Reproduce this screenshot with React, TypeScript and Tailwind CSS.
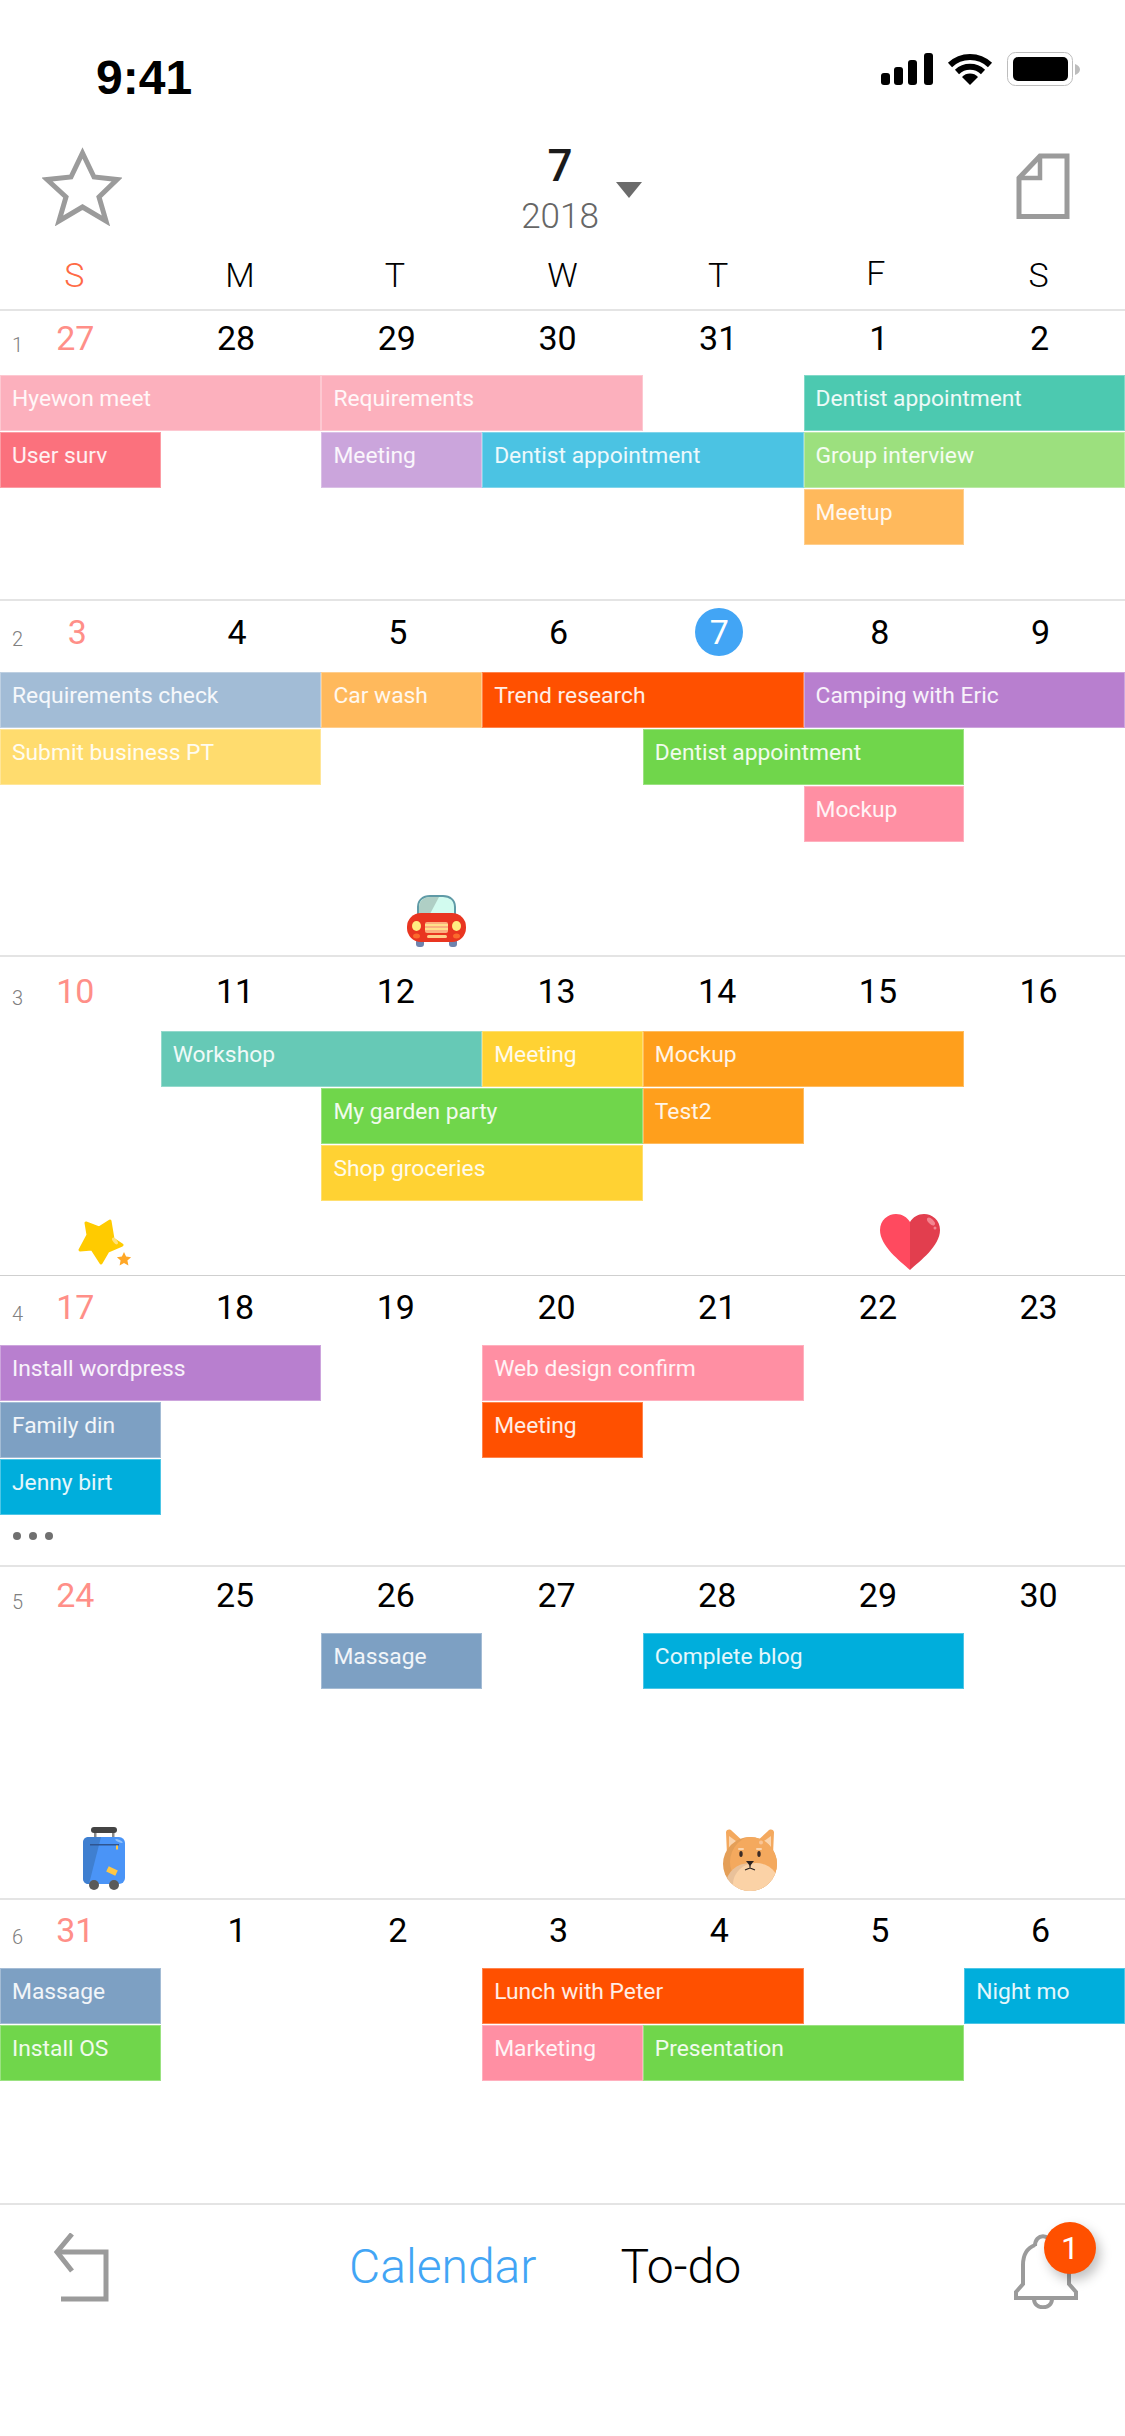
import React from 'react';

type Ev = { label: string; color: string; pos: string };

type Week = {
  no: number;
  days: number[];
  box: string;
  head: string;
  first: string;
  cell: string;
  events: Ev[];
};

const weeks: Week[] = [
  {
    no: 1,
    days: [27, 28, 29, 30, 31, 1, 2],
    box: 'h-[290px] border-t-2 border-[#e4e4e4]',
    head: 'h-[64px] pb-[10px]',
    first: 'pr-[10px]',
    cell: 'pr-[10px]',
    events: [
      { label: 'Hyewon meet', color: 'bg-[#fcb0bd]', pos: 'col-start-1 col-span-2 row-start-1' },
      { label: 'Requirements', color: 'bg-[#fcb0bd]', pos: 'col-start-3 col-span-2 row-start-1' },
      { label: 'Dentist appointment', color: 'bg-[#4cc9b0]', pos: 'col-start-6 col-span-2 row-start-1' },
      { label: 'User surv', color: 'bg-[#fb717d]', pos: 'col-start-1 col-span-1 row-start-2' },
      { label: 'Meeting', color: 'bg-[#cba5dc]', pos: 'col-start-3 col-span-1 row-start-2' },
      { label: 'Dentist appointment', color: 'bg-[#4bc3e3]', pos: 'col-start-4 col-span-2 row-start-2' },
      { label: 'Group interview', color: 'bg-[#9ce07e]', pos: 'col-start-6 col-span-2 row-start-2' },
      { label: 'Meetup', color: 'bg-[#ffb95c]', pos: 'col-start-6 col-span-1 row-start-3' },
    ],
  },
  {
    no: 2,
    days: [3, 4, 5, 6, 7, 8, 9],
    box: 'h-[356px] border-t-2 border-[#e4e4e4]',
    head: 'h-[71px] pb-[9px]',
    first: 'pr-[6px]',
    cell: 'pr-[8px]',
    events: [
      { label: 'Requirements check', color: 'bg-[#a2bcd6]', pos: 'col-start-1 col-span-2 row-start-1' },
      { label: 'Car wash', color: 'bg-[#ffb95c]', pos: 'col-start-3 col-span-1 row-start-1' },
      { label: 'Trend research', color: 'bg-[#ff5000]', pos: 'col-start-4 col-span-2 row-start-1' },
      { label: 'Camping with Eric', color: 'bg-[#b87fcf]', pos: 'col-start-6 col-span-2 row-start-1' },
      { label: 'Submit business PT', color: 'bg-[#ffdc6e]', pos: 'col-start-1 col-span-2 row-start-2' },
      { label: 'Dentist appointment', color: 'bg-[#70d64b]', pos: 'col-start-5 col-span-2 row-start-2' },
      { label: 'Mockup', color: 'bg-[#ff8fa3]', pos: 'col-start-6 col-span-1 row-start-3' },
    ],
  },
  {
    no: 3,
    days: [10, 11, 12, 13, 14, 15, 16],
    box: 'h-[320px] border-t-2 border-[#e4e4e4]',
    head: 'h-[74px] pb-[6px]',
    first: 'pr-[10px]',
    cell: 'pr-[12px]',
    events: [
      { label: 'Workshop', color: 'bg-[#66c9b6]', pos: 'col-start-2 col-span-2 row-start-1' },
      { label: 'Meeting', color: 'bg-[#ffd233]', pos: 'col-start-4 col-span-1 row-start-1' },
      { label: 'Mockup', color: 'bg-[#ff9f1c]', pos: 'col-start-5 col-span-2 row-start-1' },
      { label: 'My garden party', color: 'bg-[#70d64b]', pos: 'col-start-3 col-span-2 row-start-2' },
      { label: 'Test2', color: 'bg-[#ff9f1c]', pos: 'col-start-5 col-span-1 row-start-2' },
      { label: 'Shop groceries', color: 'bg-[#ffd233]', pos: 'col-start-3 col-span-2 row-start-3' },
    ],
  },
  {
    no: 4,
    days: [17, 18, 19, 20, 21, 22, 23],
    box: 'h-[290px] border-t border-[#cfcfcf]',
    head: 'h-[69px] pb-[8px]',
    first: 'pr-[10px]',
    cell: 'pr-[12px]',
    events: [
      { label: 'Install wordpress', color: 'bg-[#b87fcf]', pos: 'col-start-1 col-span-2 row-start-1' },
      { label: 'Web design confirm', color: 'bg-[#ff8fa3]', pos: 'col-start-4 col-span-2 row-start-1' },
      { label: 'Family din', color: 'bg-[#7da0c3]', pos: 'col-start-1 col-span-1 row-start-2' },
      { label: 'Meeting', color: 'bg-[#ff5000]', pos: 'col-start-4 col-span-1 row-start-2' },
      { label: 'Jenny birt', color: 'bg-[#00aedc]', pos: 'col-start-1 col-span-1 row-start-3' },
    ],
  },
  {
    no: 5,
    days: [24, 25, 26, 27, 28, 29, 30],
    box: 'h-[333px] border-t-2 border-[#e4e4e4]',
    head: 'h-[66px] pb-[10px]',
    first: 'pr-[10px]',
    cell: 'pr-[12px]',
    events: [
      { label: 'Massage', color: 'bg-[#7da0c3]', pos: 'col-start-3 col-span-1 row-start-1' },
      { label: 'Complete blog', color: 'bg-[#00aedc]', pos: 'col-start-5 col-span-2 row-start-1' },
    ],
  },
  {
    no: 6,
    days: [31, 1, 2, 3, 4, 5, 6],
    box: 'h-[305px] border-t-2 border-[#e4e4e4]',
    head: 'h-[68px] pb-[8px]',
    first: 'pr-[10px]',
    cell: 'pr-[8px]',
    events: [
      { label: 'Massage', color: 'bg-[#7da0c3]', pos: 'col-start-1 col-span-1 row-start-1' },
      { label: 'Lunch with Peter', color: 'bg-[#ff5000]', pos: 'col-start-4 col-span-2 row-start-1' },
      { label: 'Night mo', color: 'bg-[#00aedc]', pos: 'col-start-7 col-span-1 row-start-1' },
      { label: 'Install OS', color: 'bg-[#70d64b]', pos: 'col-start-1 col-span-1 row-start-2' },
      { label: 'Marketing', color: 'bg-[#ff8fa3]', pos: 'col-start-4 col-span-1 row-start-2' },
      { label: 'Presentation', color: 'bg-[#70d64b]', pos: 'col-start-5 col-span-2 row-start-2' },
    ],
  },
];

const weekdays = [
  { label: 'S', className: 'text-[#ff6a45] pr-[12px]' },
  { label: 'M', className: 'text-black pr-[2px]' },
  { label: 'T', className: 'text-black pr-[14px]' },
  { label: 'W', className: 'text-black' },
  { label: 'T', className: 'text-black pr-[10px]' },
  { label: 'F', className: 'text-black pr-[16px] pb-[4px]' },
  { label: 'S', className: 'text-black pr-[12px]' },
];

function StatusIcons() {
  return (
    <div className="flex items-start gap-[14px]">
      <svg width="52" height="33" viewBox="0 0 52 33">
        <rect x="0" y="21" width="9" height="12" rx="3" fill="#000" />
        <rect x="13" y="15" width="9" height="18" rx="3" fill="#000" />
        <rect x="27" y="8" width="9" height="25" rx="3" fill="#000" />
        <rect x="43" y="1" width="9" height="32" rx="3" fill="#000" />
      </svg>
      <svg width="46" height="33" viewBox="0 0 46 33" fill="none">
        <path d="M3 13 A29 29 0 0 1 43 13" stroke="#000" strokeWidth="6" />
        <path d="M10 20 A19 19 0 0 1 36 20" stroke="#000" strokeWidth="6" />
        <path d="M23 33 L15 25 A11 11 0 0 1 31 25 Z" fill="#000" />
      </svg>
      <svg width="74" height="35" viewBox="0 0 74 35">
        <rect x="0.5" y="0.5" width="65" height="33" rx="8" fill="#fff" stroke="#bdbdbd" />
        <rect x="6" y="5" width="55" height="24" rx="5" fill="#000" />
        <path d="M68 12 C71 13 73 15 73 17.5 C73 20 71 22 68 23 Z" fill="#bdbdbd" />
      </svg>
    </div>
  );
}

function StarIcon() {
  return (
    <svg width="80" height="79" viewBox="0 0 80 79" fill="none">
      <path
        d="M40.5 6 L52 30 L75 32.5 L57 50 L64 74 L40.5 60 L17 74 L24 50 L5 32.5 L29 30 Z"
        stroke="#9b9b9b"
        strokeWidth="5"
      />
    </svg>
  );
}

function DocIcon() {
  return (
    <svg width="54" height="67" viewBox="0 0 54 67" fill="none" stroke="#9b9b9b">
      <path d="M24 3 H51 V63.5 H3 V25 Z" strokeWidth="5" />
      <path d="M24 3 V25 H3" strokeWidth="4.5" />
    </svg>
  );
}

function BackIcon() {
  return (
    <svg width="55" height="69" viewBox="0 0 55 69" fill="none" stroke="#9b9b9b" strokeWidth="5">
      <path d="M18 1 L3 19 L18 38" />
      <path d="M3 19 H52 V66 H7" />
    </svg>
  );
}

function BellIcon() {
  return (
    <svg width="66" height="76" viewBox="0 0 66 76" fill="none" stroke="#9b9b9b" strokeWidth="4">
      <path d="M22 13 C22 0 38 0 38 13" />
      <path d="M22 12 C14 15 10 22 10 32 V51 L3 59 V65 H63 V59 L56 51 V32 C56 22 46 15 38 12" />
      <path d="M21 66 C21 77 39 77 39 66" />
    </svg>
  );
}

function CarSticker() {
  return (
    <svg width="59" height="52" viewBox="0 0 59 52">
      <path d="M11 20 V12 C11 5 16 1 23 1 H36 C43 1 48 5 48 12 V20 Z" fill="#d2fbef" stroke="#5f9aa6" strokeWidth="2" />
      <path d="M12 19 V12 C12 6 17 2 23 2 H32 L23 19 Z" fill="#afcfc5" />
      <rect x="9" y="44" width="8" height="8" rx="3" fill="#6f83ad" />
      <rect x="42" y="44" width="8" height="8" rx="3" fill="#6f83ad" />
      <rect x="0" y="18" width="59" height="29" rx="14" fill="#e93520" />
      <ellipse cx="9.500" cy="31" rx="4.500" ry="5" fill="#ffee82" />
      <ellipse cx="49.500" cy="31" rx="4.500" ry="5" fill="#ffee82" />
      <ellipse cx="9.500" cy="41" rx="3.500" ry="2.500" fill="#fb6a2c" />
      <ellipse cx="49.500" cy="41" rx="3.500" ry="2.500" fill="#fb6a2c" />
      <rect x="18" y="27" width="23" height="11" rx="2" fill="#fbb07e" />
      <rect x="18" y="29" width="23" height="2" fill="#ffe08a" />
      <rect x="18" y="33" width="23" height="2" fill="#ffe08a" />
      <rect x="20" y="40" width="20" height="3" rx="1.500" fill="#ffd08a" />
    </svg>
  );
}

function StarSticker() {
  return (
    <svg width="54" height="48" viewBox="0 0 54 48">
      <path
        d="M8 4 L21 9 L32 2 L35 20 L44 26 L30 32 L23 44 L14 30 L2 31 L10 16 Z"
        fill="#ffcb00"
        stroke="#ffcb00"
        strokeWidth="3"
        strokeLinejoin="round"
      />
      <ellipse cx="37" cy="22" rx="1.800" ry="4" fill="#ffe27a" transform="rotate(-40 37 22)" />
      <path
        d="M46 33 L48.100 37.600 L53.100 38.200 L49.400 41.600 L50.400 46.600 L46 44.100 L41.600 46.600 L42.600 41.600 L38.900 38.200 L43.900 37.600 Z"
        fill="#ffa726"
      />
    </svg>
  );
}

function HeartSticker() {
  return (
    <svg width="60" height="56" viewBox="0 0 60 56">
      <path d="M30 56 C20 47 0 32 0 16 C0 6 8 0 16 0 C22 0 27 3 30 8 Z" fill="#ff4a5f" />
      <path d="M30 56 C40 47 60 32 60 16 C60 6 52 0 44 0 C38 0 33 3 30 8 Z" fill="#e23e4e" />
      <ellipse cx="51" cy="7.500" rx="2.500" ry="5" fill="#f4848f" transform="rotate(-45 51 7.500)" />
      <circle cx="55" cy="14" r="1.500" fill="#f4848f" />
    </svg>
  );
}

function SuitcaseSticker() {
  return (
    <svg width="42" height="64" viewBox="0 0 42 64">
      <rect x="11" y="4" width="2.500" height="8" fill="#8a8a8a" />
      <rect x="29" y="4" width="2.500" height="8" fill="#8a8a8a" />
      <rect x="8" y="0" width="26" height="6" rx="3" fill="#444" />
      <rect x="0" y="10" width="42" height="47" rx="6" fill="#4a94f7" />
      <path d="M6 10 H18 L6 57 C2 57 0 55 0 51 V16 C0 12 2 10 6 10 Z" fill="#3f7fd0" />
      <rect x="7" y="17" width="29" height="1.500" fill="#2f5590" />
      <rect x="33" y="18.500" width="2" height="4" fill="#ffc744" />
      <rect x="24" y="41" width="10" height="6" fill="#ffc744" transform="rotate(25 29 44)" />
      <ellipse cx="36" cy="14" rx="4" ry="1.200" fill="#8fc0fa" transform="rotate(25 36 14)" />
      <circle cx="11" cy="58" r="5" fill="#5a5a5a" />
      <circle cx="31" cy="58" r="5" fill="#5a5a5a" />
    </svg>
  );
}

function DogSticker() {
  return (
    <svg width="54" height="62" viewBox="0 0 54 62">
      <defs>
        <clipPath id="dog-face">
          <circle cx="27" cy="35" r="27" />
        </clipPath>
      </defs>
      <path d="M3 3 C4 0 7 0 9 2 L22 14 L4 26 Z" fill="#f4a95e" />
      <path d="M51 3 C50 0 47 0 45 2 L32 14 L50 26 Z" fill="#f4a95e" />
      <path d="M6 7 L17 15 L6 22 Z" fill="#fbd5ae" />
      <path d="M48 7 L37 15 L48 22 Z" fill="#fbd5ae" />
      <g clipPath="url(#dog-face)">
        <rect x="0" y="8" width="54" height="54" fill="#e49f58" />
        <circle cx="34" cy="33" r="27" fill="#f4a95e" />
        <ellipse cx="27" cy="55" rx="24" ry="21" fill="#e9c19a" />
        <ellipse cx="33" cy="55" rx="23" ry="21" fill="#fbd2a6" />
      </g>
      <ellipse cx="18" cy="25" rx="1.700" ry="3" fill="#3b2a25" />
      <ellipse cx="36" cy="25" rx="1.700" ry="3" fill="#3b2a25" />
      <rect x="15" y="19" width="6" height="2" rx="1" fill="#fbd5ae" />
      <rect x="33" y="19" width="6" height="2" rx="1" fill="#fbd5ae" />
      <circle cx="38" cy="13.500" r="2" fill="#f9c596" />
      <path d="M23 32 H31 L27 37 Z" fill="#2c2320" />
      <path d="M27 36 V39 M22 41 L27 39 L32 41" fill="none" stroke="#2c2320" strokeWidth="1.200" />
    </svg>
  );
}

function Event({ label, color, pos }: Ev) {
  return (
    <div className={`${pos} ${color} h-[56px] border border-white/30 pl-[11px] pt-[7px] text-[22.8px] leading-[32px] text-white/90 whitespace-nowrap overflow-hidden`}>
      {label}
    </div>
  );
}

function WeekRow({ week }: { week: Week }) {
  return (
    <section className={`relative shrink-0 ${week.box}`}>
      <div className={`grid grid-cols-7 ${week.head}`}>
        {week.days.map((d, i) => {
          const today = week.no === 2 && d === 7;
          return (
            <div key={i} className={`relative flex items-center justify-center ${i === 0 ? week.first : week.cell}`}>
              {i === 0 && (
                <span className="absolute left-[12px] top-1/2 mt-[7px] -translate-y-1/2 text-[20px] font-light leading-none text-[#808080]">
                  {week.no}
                </span>
              )}
              {today ? (
                <span className="flex h-[48px] w-[48px] items-center justify-center rounded-full bg-[#42a5f5] text-[34px] text-white">
                  {d}
                </span>
              ) : (
                <span className={`text-[34px] leading-none ${i === 0 ? 'text-[#ff8f88]' : 'text-black'}`}>{d}</span>
              )}
            </div>
          );
        })}
      </div>
      <div className="grid grid-cols-7 gap-y-px">
        {week.events.map((e, i) => (
          <Event key={i} {...e} />
        ))}
      </div>
      {week.no === 2 && (
        <div className="absolute bottom-[8px] left-[407px]">
          <CarSticker />
        </div>
      )}
      {week.no === 3 && (
        <>
          <div className="absolute bottom-[8px] left-[78px]">
            <StarSticker />
          </div>
          <div className="absolute bottom-[5px] left-[880px]">
            <HeartSticker />
          </div>
        </>
      )}
      {week.no === 4 && (
        <div className="mt-[17px] flex gap-2 pl-[13px]">
          <span className="h-2 w-2 rounded-full bg-[#707070]" />
          <span className="h-2 w-2 rounded-full bg-[#707070]" />
          <span className="h-2 w-2 rounded-full bg-[#707070]" />
        </div>
      )}
      {week.no === 5 && (
        <>
          <div className="absolute bottom-[7px] left-[83px]">
            <SuitcaseSticker />
          </div>
          <div className="absolute bottom-[7px] left-[723px]">
            <DogSticker />
          </div>
        </>
      )}
    </section>
  );
}

export default function App() {
  return (
    <div className="flex h-[2436px] w-[1125px] flex-col overflow-hidden bg-white font-['Roboto',sans-serif]">
      <header className="flex h-[140px] shrink-0 items-start justify-between pl-[96px] pr-[44px]">
        <span className="mt-[52px] font-['Liberation_Sans',sans-serif] text-[48px] font-bold leading-[52px] text-black">
          9:41
        </span>
        <div className="mt-[52px]">
          <StatusIcons />
        </div>
      </header>

      <nav className="grid h-[100px] shrink-0 grid-cols-[1fr_auto_1fr] pl-[42px] pr-[55px]">
        <div className="pt-[7px]">
          <StarIcon />
        </div>
        <div className="relative flex flex-col items-center pl-[8px]">
          <span className="mt-[1px] text-[44px] font-medium leading-[50px] text-[#1a1a1a]">7</span>
          <span className="mt-[6px] text-[35px] font-light leading-[40px] text-[#666]">2018</span>
          <svg className="absolute left-[103px] top-[42px]" width="26" height="16" viewBox="0 0 26 16">
            <path d="M0 0 H26 L13 16 Z" fill="#6b6b6b" />
          </svg>
        </div>
        <div className="flex justify-end pt-[13px]">
          <DocIcon />
        </div>
      </nav>

      <div className="grid h-[69px] shrink-0 grid-cols-7 pt-[2px] text-[34px] font-light">
        {weekdays.map((d, i) => (
          <div key={i} className={`flex items-center justify-center ${d.className}`}>
            {d.label}
          </div>
        ))}
      </div>

      {weeks.map((w) => (
        <WeekRow key={w.no} week={w} />
      ))}

      <footer className="flex min-h-0 flex-1 items-start border-t-2 border-[#e4e4e4] pl-[54px] pr-[46px] pt-[28px]">
        <BackIcon />
        <div className="ml-[240px] mt-[2px] flex gap-[84px] text-[48px] font-light leading-[64px]">
          <span className="text-[#42a5f5]">Calendar</span>
          <span className="text-black">To-do</span>
        </div>
        <div className="relative ml-auto">
          <BellIcon />
          <span className="absolute left-[31px] top-[-11px] flex h-[52px] w-[52px] items-center justify-center rounded-full bg-[#ff5000] text-[32px] text-white shadow-[4px_6px_12px_rgba(0,0,0,0.25)]">
            1
          </span>
        </div>
      </footer>
    </div>
  );
}
